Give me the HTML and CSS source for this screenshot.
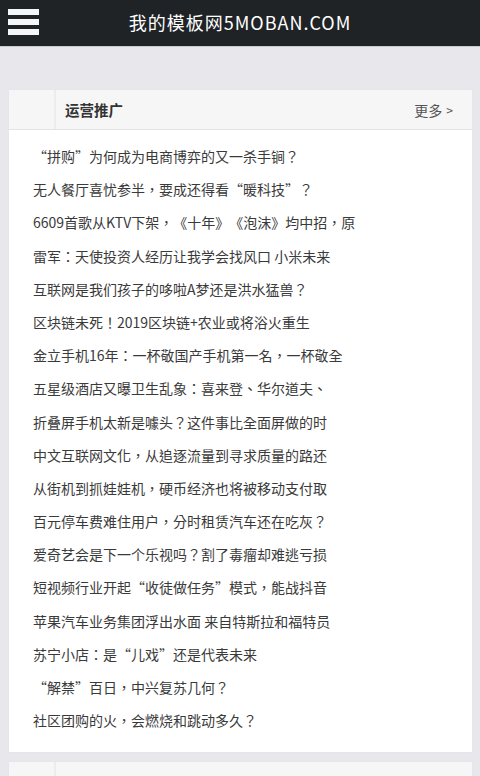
FILE: index.html
```html
<!DOCTYPE html>
<html lang="zh-CN">
<head>
<meta charset="utf-8">
<title>我的模板网5MOBAN.COM</title>
<link rel="stylesheet" href="styles.css">
</head>
<body>
<header class="topbar">
  <div class="menu-btn" aria-label="菜单">
    <span></span><span></span><span></span>
  </div>
  <h1 class="site-title">我的模板网5MOBAN.COM</h1>
</header>
<main class="content">
  <section class="card">
    <div class="card-head">
      <div class="card-icon"></div>
      <h2 class="card-title">运营推广</h2>
      <a class="card-more" href="#">更多<span class="arrow">&gt;</span></a>
    </div>
    <ul class="news-list" lang="zh-TW">
      <li>“拼购”为何成为电商博弈的又一杀手锏？</li>
      <li>无人餐厅喜忧参半，要成还得看“暖科技”？</li>
      <li>6609首歌从KTV下架，《十年》《泡沫》均中招，原</li>
      <li>雷军：天使投资人经历让我学会找风口 小米未来</li>
      <li>互联网是我们孩子的哆啦A梦还是洪水猛兽？</li>
      <li>区块链未死！2019区块链+农业或将浴火重生</li>
      <li>金立手机16年：一杯敬国产手机第一名，一杯敬全</li>
      <li>五星级酒店又曝卫生乱象：喜来登、华尔道夫、</li>
      <li>折叠屏手机太新是噱头？这件事比全面屏做的时</li>
      <li>中文互联网文化，从追逐流量到寻求质量的路还</li>
      <li>从街机到抓娃娃机，硬币经济也将被移动支付取</li>
      <li>百元停车费难住用户，分时租赁汽车还在吃灰？</li>
      <li>爱奇艺会是下一个乐视吗？割了毒瘤却难逃亏损</li>
      <li>短视频行业开起“收徒做任务”模式，能战抖音</li>
      <li>苹果汽车业务集团浮出水面 来自特斯拉和福特员</li>
      <li>苏宁小店：是“儿戏”还是代表未来</li>
      <li>“解禁”百日，中兴复苏几何？</li>
      <li>社区团购的火，会燃烧和跳动多久？</li>
    </ul>
  </section>
  <section class="card">
    <div class="card-head">
      <div class="card-icon"></div>
      <h2 class="card-title"></h2>
    </div>
  </section>
</main>
</body>
</html>
```

FILE: styles.css
```css
* { box-sizing: border-box; }
html, body {
  margin: 0;
  padding: 0;
  background: #e8e8ec;
  font-family: "Noto Sans CJK SC", "Noto Sans", sans-serif;
  color: #333;
  overflow: hidden;
}
.topbar {
  height: 47px;
  background: #1f2326;
  border-bottom: 1px solid #c9c9cc;
  display: flex;
  align-items: center;
  position: relative;
}
.menu-btn {
  width: 31px;
  margin-left: 8px;
  display: flex;
  flex-direction: column;
  gap: 4px;
  margin-top: -2px;
}
.menu-btn span {
  display: block;
  height: 6px;
  background: #f4f6f8;
}
.site-title {
  position: absolute;
  left: 0;
  right: 0;
  top: 0;
  margin: 0;
  text-align: center;
  font-size: 18px;
  font-weight: normal;
  line-height: 44px;
  color: #fff;
  letter-spacing: 1px;
  pointer-events: none;
}
.content {
  padding: 43px 8px 0 9px;
}
.card {
  background: #fff;
  margin-bottom: 10px;
  box-shadow: 0 0 1px rgba(0,0,0,0.06);
}
.card-head {
  height: 40px;
  background: #f6f6f7;
  border-bottom: 1px solid #e4e4e6;
  display: flex;
  align-items: center;
}
.card-icon {
  width: 47px;
  align-self: stretch;
  border-right: 2px solid #ececee;
}
.card-title {
  margin: 0 0 0 9px;
  font-size: 14.5px;
  font-weight: bold;
  color: #333;
  flex: 1;
  line-height: 40px;
}
.card-more {
  margin-right: 19px;
  font-size: 14px;
  color: #555;
  text-decoration: none;
  display: flex;
  align-items: center;
}
.card-more .arrow {
  font-size: 12px;
  margin-left: 4px;
}
.news-list {
  list-style: none;
  margin: 0;
  padding: 10px 0 15px 24px;
  font-family: "Noto Sans CJK TC", "Noto Sans CJK SC", sans-serif;
  text-spacing-trim: space-all;
}
.news-list li {
  font-size: 14px;
  line-height: 33.2px;
  height: 33.2px;
  color: #3a3a3a;
  white-space: nowrap;
  overflow: hidden;
}
```
